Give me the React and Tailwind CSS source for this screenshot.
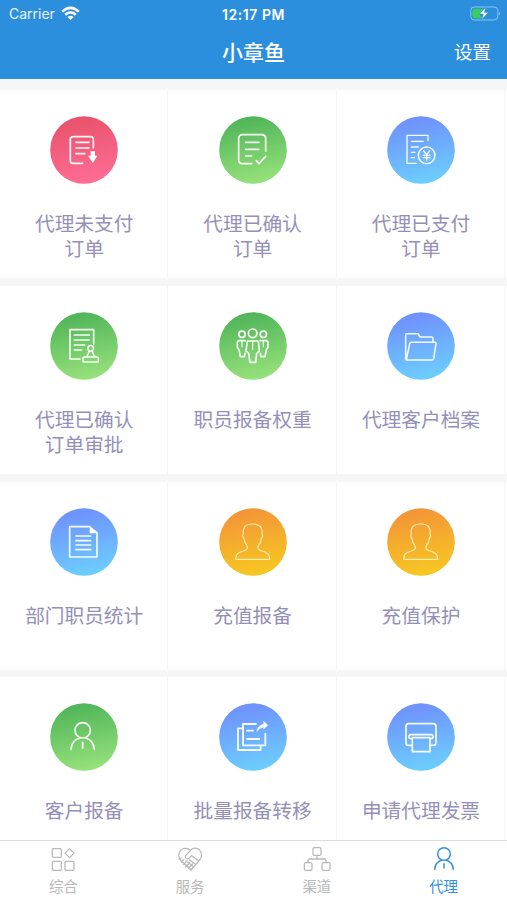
import React from "react";

const LINE = {
  fill: "none",
  stroke: "#fff",
  strokeOpacity: 0.95,
  strokeWidth: 5,
  strokeLinecap: "round",
  strokeLinejoin: "round",
};

const GRADIENTS = {
  red: ["#e9536c", "#fd6c93"],
  green: ["#52b65a", "#94e07a"],
  blue: ["#6f92fd", "#6cccfd"],
  orange: ["#f39637", "#f7c622"],
};

function PersonOutline() {
  return (
    <path
      strokeWidth="3.5"
      stroke="#fff0b4"
      d="M83 188 C82 170 93 167 109 162 C119 158 120 154 117 147 C112 141 109 135 108 126 C104 121 103 116 106 112 C103 92 113 82 134 82 C155 82 165 92 162 112 C165 116 164 121 160 126 C159 135 156 141 151 147 C148 154 149 158 159 162 C175 167 186 170 185 188 Z"
    />
  );
}

const ICONS = {
  download: (
    <>
      <path d="M163 130 V104 Q163 96 155 96 H103 Q94 96 94 104 V168 Q94 176 103 176 H131" />
      <path d="M111 113 H150 M111 130 H150 M111 147 H137" />
      <path d="M155 140 H168 V153 H175 L161.500 175 L147 153 H155 Z" fill="#fff" stroke="none" />
    </>
  ),
  check: (
    <>
      <path d="M173 140 V102 Q173 90 161 90 H104 Q92 90 92 102 V166 Q92 177 104 177 H131" />
      <path d="M113 113 H153 M113 134 H153 M113 154 H131 M145 168 L153 177 L173 155" />
    </>
  ),
  yen: (
    <>
      <path strokeWidth="4" d="M156 108 V92 H93 V176 H122 M106 110 H142 M106 127 H127 M106 143 H117 M106 159 H115" />
      <circle cx="152" cy="152" r="25" strokeWidth="4.500" />
      <path strokeWidth="4" d="M143 139 L152 150 L161 139 M152 150 V166 M142 152 H162 M142 159 H162" />
    </>
  ),
  stamp: (
    <>
      <path d="M164 131 V87 H93 V175 H123 M106 103 H151 M106 118 H151 M106 133 H137 M106 148 H128" />
      <circle cx="155" cy="143" r="8.500" />
      <path d="M151 151 L145 165 M159 151 L165 165 M136 169 H175 Q178 169 178 173 V180 Q178 184 175 184 H136 Q132 184 132 180 V173 Q132 169 136 169 Z" />
    </>
  ),
  team: (
    <>
      <circle cx="134" cy="98" r="13" />
      <circle cx="102" cy="101" r="9.500" />
      <circle cx="166" cy="101" r="9.500" />
      <path d="M120 121 H148 Q151 121 152 129 L154 151 L146 158 L143 185 H126 L122 158 L114 151 L117 129 Q117 121 120 121 Z" />
      <path d="M112 120 H94 Q88 120 88 127 V140 L93 147 L97 168 H109 L111 158 M156 120 H174 Q180 120 180 127 V140 L175 147 L171 168 H159 L157 158" />
      <path strokeWidth="3.500" d="M134 123 V146 M102 122 V138 M166 122 V138" />
    </>
  ),
  folder: (
    <path strokeWidth="4.500" d="M91 178 Q89 177 89 173 V104 Q89 99 94 99 H126 L132 109 H166 Q171 109 171 114 V124 M91 178 L101 129 Q102 125 106 125 H177 Q181 125 180 129 L173 174 Q172 178 168 178 Z" />
  ),
  document: (
    <>
      <path d="M152 90 H92 V181 H174 V110 M111 118 H155 M111 132 H155 M111 145 H155 M111 159 H155" />
      <path d="M152 88 L176 107 V110 H152 Z" fill="#fff" stroke="none" />
    </>
  ),
  person: <PersonOutline />,
  agent: (
    <>
      <circle cx="131" cy="116" r="23" />
      <path d="M96 173 C98 153 108 142 123 139 M166 173 C164 153 154 142 139 139" />
      <path strokeWidth="5.500" d="M131 152 V169" />
    </>
  ),
  transfer: (
    <>
      <path strokeLinecap="butt" strokeWidth="5.500" d="M146 97 H105 V161 H172 V124 M105 110 H90 V175 H158 V161 M115 117 H137 M115 142 H156" />
      <path d="M147 118 Q149 101 167 98 V89 L179 101 L167 112 V106 Q156 107 147 118 Z" fill="#fff" stroke="#fff" strokeWidth="1.500" />
    </>
  ),
  printer: (
    <>
      <path d="M109 161 H98 Q90 161 90 153 V104 Q90 96 98 96 H171 Q180 96 180 104 V153 Q180 161 171 161 H162" />
      <path d="M104 141 Q99 141 99 136 V134 Q99 129 105 129 H166 Q171 129 171 134 V136 Q171 141 165 141 M109 138 H162 V180 H109 Z" />
    </>
  ),
};

function RoundIcon({ name, color, id }) {
  const [from, to] = GRADIENTS[color];
  return (
    <svg className="block h-[68px] w-[68px] shrink-0" viewBox="33 34 204 204" aria-hidden="true">
      <defs>
        <linearGradient id={id} x1="0.4" y1="0" x2="0.6" y2="1">
          <stop offset="0.05" stopColor={from} />
          <stop offset="0.95" stopColor={to} />
        </linearGradient>
      </defs>
      <circle cx="135" cy="136" r="101.5" fill={`url(#${id})`} />
      <g {...LINE}>{ICONS[name]}</g>
    </svg>
  );
}

const ROWS = [
  [
    { icon: "download", color: "red", lines: ["代理未支付", "订单"] },
    { icon: "check", color: "green", lines: ["代理已确认", "订单"] },
    { icon: "yen", color: "blue", lines: ["代理已支付", "订单"] },
  ],
  [
    { icon: "stamp", color: "green", lines: ["代理已确认", "订单审批"] },
    { icon: "team", color: "green", lines: ["职员报备权重"] },
    { icon: "folder", color: "blue", lines: ["代理客户档案"] },
  ],
  [
    { icon: "document", color: "blue", lines: ["部门职员统计"] },
    { icon: "person", color: "orange", lines: ["充值报备"] },
    { icon: "person", color: "orange", lines: ["充值保护"] },
  ],
  [
    { icon: "agent", color: "green", lines: ["客户报备"] },
    { icon: "transfer", color: "blue", lines: ["批量报备转移"] },
    { icon: "printer", color: "blue", lines: ["申请代理发票"] },
  ],
];

function Tile({ item, id }) {
  return (
    <div className="flex w-[168.4px] shrink-0 flex-col items-center border-r border-[#f5f5f5] pt-[26px] pl-px">
      <RoundIcon name={item.icon} color={item.color} id={id} />
      <div className="mt-[26px] text-center text-[19.7px] leading-[25px] text-[#9490b8]">
        {item.lines.map((line) => (
          <div key={line} className="whitespace-nowrap">
            {line}
          </div>
        ))}
      </div>
    </div>
  );
}

const TAB_ICONS = {
  grid: (
    <>
      <rect x="159" y="56" width="27" height="26" rx="3" />
      <rect x="159" y="94" width="27" height="27" rx="3" />
      <rect x="197" y="94" width="27" height="27" rx="3" />
      <path d="M210.500 56 L224 69.500 L210.500 83 L197 69.500 Z" />
    </>
  ),
  heart: (
    <g transform="translate(-381 0)">
      <path d="M573 61 C565 52 550 54 543 62 C535 71 538 84 545 92 L575 120 L600 91 C610 80 608 65 598 58 C589 52 579 56 573 61 L559 77 C555 85 565 90 571 83 L577 77 L599 93" />
      <path d="M545 84 L540 88 M554 88 L546 96 M563 92 L552 104 M571 98 L559 111 M579 102 L568 116 M570 89 L590 104 M565 96 L583 111 M556 101 L576 120" />
    </g>
  ),
  tree: (
    <g transform="translate(-759 0)">
      <rect x="938" y="53" width="24" height="23" rx="4" />
      <rect x="912" y="98" width="23" height="23" rx="4" />
      <rect x="965" y="98" width="24" height="23" rx="4" />
      <path d="M950 76 V87 M923 98 V92 Q923 87 929 87 H972 Q977 87 977 92 V98" />
    </g>
  ),
  agent: (
    <g transform="translate(-1139 0)" strokeWidth="4.5">
      <circle cx="1330" cy="72" r="19" />
      <path d="M1302 118 C1304 102 1311 94 1323 91 M1358 118 C1356 102 1349 94 1337 91 M1330 101 V114" />
    </g>
  ),
};

const TABS = [
  { icon: "grid", label: "综合" },
  { icon: "heart", label: "服务" },
  { icon: "tree", label: "渠道" },
  { icon: "agent", label: "代理", active: true },
];

function StatusBar() {
  return (
    <div className="grid h-[28px] grid-cols-3 items-center px-[9px] font-[Inter,sans-serif] text-white">
      <div className="flex items-center gap-[6px] text-[14px] leading-none">
        <span className="text-white/90">Carrier</span>
        <svg className="-mt-[2px] h-[15px] w-[19px]" viewBox="0 0 19 15" aria-hidden="true">
          <g fill="none" stroke="#fff" strokeWidth="2.500">
            <path d="M1.200 5.700 Q9.500 -2 17.800 5.700" />
            <path d="M4.200 8.800 Q9.500 4 14.800 8.800" />
          </g>
          <path d="M6.400 10.900 Q9.500 8.400 12.600 10.900 L9.500 14.200 Z" fill="#fff" />
        </svg>
      </div>
      <div className="pt-px text-center text-[14px] leading-none font-semibold tracking-[0.55px] whitespace-nowrap">
        12:17 PM
      </div>
      <svg className="-mt-[2px] -mr-[3px] h-[15px] w-[31px] justify-self-end" viewBox="0 0 31 15" aria-hidden="true">
        <rect x="0.800" y="1" width="27" height="13" rx="3.500" fill="none" stroke="#8fc4ee" />
        <path d="M29 5.500 Q31 7.500 29 9.500 Z" fill="#8fc4ee" />
        <path d="M4.500 2.800 H13.500 L9.500 8 L12 12.200 H4.500 Q2.500 12.200 2.500 10.200 V4.800 Q2.500 2.800 4.500 2.800 Z" fill="#38cd62" />
        <path d="M15.800 1.200 L9.500 8 H13.300 L11.800 13.600 L18.300 6.600 H14.300 Z" fill="#fff" stroke="#2b8fdd" strokeWidth="0.500" />
      </svg>
    </div>
  );
}

export default function App() {
  return (
    <div className="flex h-[900px] w-[507px] flex-col overflow-hidden bg-[#f6f6f6] font-['Noto_Sans_CJK_SC',sans-serif]">
      <header className="h-[79px] shrink-0 bg-[#2b8fdd] text-white">
        <StatusBar />
        <div className="grid h-[47px] grid-cols-3 items-center">
          <span />
          <h1 className="text-center text-[21px] leading-none font-medium">小章鱼</h1>
          <span className="justify-self-end pr-[16px] text-[18.7px] leading-none">设置</span>
        </div>
      </header>
      <main className="flex min-h-0 flex-1 flex-col gap-[7.8px] overflow-hidden pt-[11px]">
        {ROWS.map((row, r) => (
          <section key={r} className="flex h-[188px] shrink-0 bg-white">
            {row.map((item, c) => (
              <Tile key={item.lines.join("")} item={item} id={`tile-${r}-${c}`} />
            ))}
          </section>
        ))}
      </main>
      <nav className="grid h-[60px] shrink-0 grid-cols-4 border-t border-[#dcdcdc] bg-white">
        {TABS.map((tab) => (
          <div
            key={tab.label}
            className={`flex flex-col items-center pt-[5px] ${tab.active ? "text-[#3292e2]" : "text-[#b9b9b9]"}`}
          >
            <svg
              className="h-[27px] w-[30px]"
              viewBox="146 48 90 81"
              fill="none"
              stroke="currentColor"
              strokeWidth="3.8"
              strokeLinecap="round"
              strokeLinejoin="round"
              aria-hidden="true"
            >
              {TAB_ICONS[tab.icon]}
            </svg>
            <span className="mt-[5px] text-[14.5px] leading-[16px]">{tab.label}</span>
          </div>
        ))}
      </nav>
    </div>
  );
}
